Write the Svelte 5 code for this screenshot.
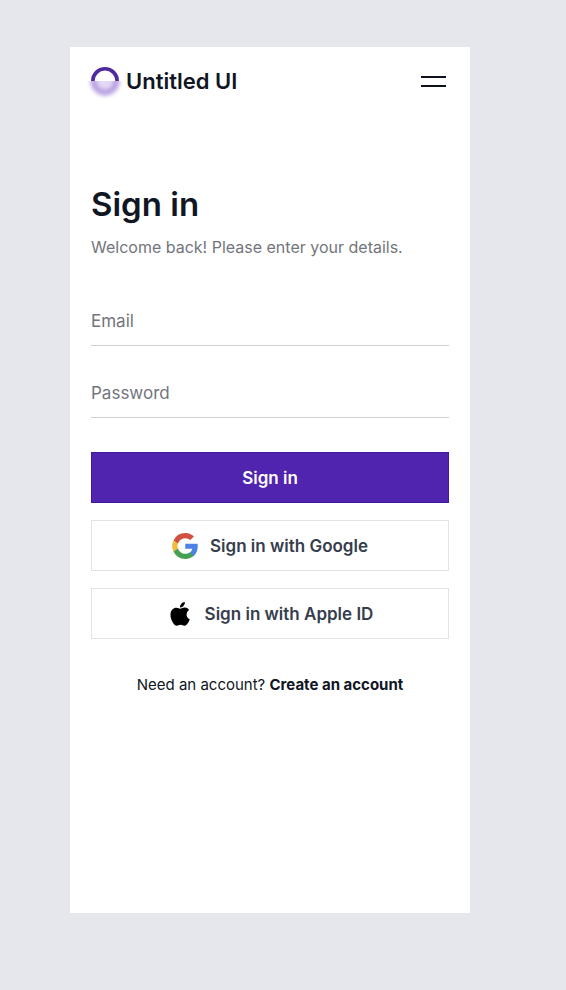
<script>
  let email = $state('');
  let password = $state('');
</script>

<main class="screen">
  <header>
    <a class="brand" href="#home">
      <svg class="logo" viewBox="0 0 36 36" aria-hidden="true">
        <defs>
          <filter id="soft" x="-50%" y="-50%" width="200%" height="200%">
            <feGaussianBlur stdDeviation="2" />
          </filter>
          <clipPath id="lower"><rect x="0" y="18" width="36" height="18" /></clipPath>
        </defs>
        <path d="M5.8 18a12.2 12.2 0 0 1 24.4 0" fill="none" stroke="#4f2a9e" stroke-width="3.6" />
        <g clip-path="url(#lower)">
          <circle cx="18" cy="18" r="11.5" fill="#e4daf5" stroke="#b59de0" stroke-width="6" filter="url(#soft)" />
        </g>
      </svg>
      <span>Untitled UI</span>
    </a>
    <button class="menu" type="button" aria-label="Open menu">
      <svg viewBox="0 0 25 14" aria-hidden="true">
        <path d="M0 3h25M0 12h25" stroke="#0c111d" stroke-width="2" />
      </svg>
    </button>
  </header>

  <section>
    <h1>Sign in</h1>
    <p class="lead">Welcome back! Please enter your details.</p>

    <form onsubmit={(e) => e.preventDefault()}>
      <div class="fields">
        <input type="email" aria-label="Email" placeholder="Email" bind:value={email} />
        <input type="password" aria-label="Password" placeholder="Password" bind:value={password} />
      </div>
      <div class="actions">
        <button class="btn primary" type="submit">Sign in</button>
        <button class="btn" type="button">
          <svg class="icon" viewBox="0 0 24 24" aria-hidden="true">
            <path fill="#4c82e6" d="M23.77 12.28c0-.82-.07-1.64-.21-2.43H12.24v4.62h6.48a5.55 5.55 0 0 1-2.4 3.65v3h3.87c2.27-2.09 3.58-5.18 3.58-8.84Z" />
            <path fill="#46a054" d="M12.24 24c3.24 0 5.97-1.06 7.96-2.89l-3.87-3c-1.08.73-2.46 1.15-4.09 1.15-3.14 0-5.8-2.12-6.75-4.96H1.5v3.09A12 12 0 0 0 12.24 24Z" />
            <path fill="#f0bd42" d="M5.49 14.3a7.2 7.2 0 0 1 0-4.6V6.61H1.5a12 12 0 0 0 0 10.78l3.99-3.09Z" />
            <path fill="#d05140" d="M12.24 4.75a6.5 6.5 0 0 1 4.6 1.8l3.43-3.43A11.5 11.5 0 0 0 12.24 0 12 12 0 0 0 1.5 6.61L5.49 9.7c.94-2.84 3.6-4.95 6.75-4.95Z" />
          </svg>
          <span>Sign in with Google</span>
        </button>
        <button class="btn" type="button">
          <svg class="icon" viewBox="0 0 26 26" aria-hidden="true">
            <g transform="translate(2.4 0.6) scale(0.95)">
              <path fill="#000" d="M20.8 8.9c-.15.11-2.7 1.55-2.7 4.75 0 3.7 3.25 5.01 3.35 5.04-.02.08-.52 1.8-1.71 3.54-1.07 1.54-2.18 3.07-3.88 3.07s-2.13-.98-4.09-.98c-1.91 0-2.59 1.02-4.14 1.02s-2.64-1.43-3.88-3.18C2.3 20.1 1.14 16.89 1.14 13.84c0-4.88 3.17-7.47 6.3-7.47 1.66 0 3.04 1.09 4.08 1.09 1 0 2.54-1.16 4.43-1.16.72 0 3.29.07 4.85 2.6ZM14.94 4.36c.78-.92 1.33-2.2 1.33-3.48 0-.18-.02-.36-.05-.5-1.27.05-2.77.84-3.68 1.9-.72.81-1.38 2.09-1.38 3.39 0 .2.03.39.05.45.08.02.21.03.34.03 1.14 0 2.57-.76 3.39-1.79Z" />
            </g>
          </svg>
          <span>Sign in with Apple ID</span>
        </button>
      </div>
    </form>

    <p class="signup">Need an account? <a href="#create">Create an account</a></p>
  </section>
</main>

<style>
  :global(body) {
    margin: 0;
    background: #e6e7ec;
  }
  .screen {
    box-sizing: border-box;
    min-height: calc(100vh - 124px);
    margin: 47px 96px 77px 70px;
    padding: 0 21px;
    background: #fff;
    color: #101623;
    font-family: Inter, "Liberation Sans", sans-serif;
  }
  header {
    display: flex;
    align-items: center;
    justify-content: space-between;
    height: 68px;
  }
  .brand {
    display: flex;
    align-items: center;
    gap: 3px;
    margin-left: -4px;
    color: inherit;
    font-size: 22px;
    line-height: 28px;
    font-weight: 600;
    text-decoration: none;
  }
  .logo {
    width: 36px;
    height: 36px;
  }
  .menu {
    display: flex;
    margin: 0 3px 0 0;
    padding: 0;
    border: 0;
    background: none;
  }
  .menu svg {
    width: 25px;
    height: 14px;
  }
  section {
    padding-top: 68px;
  }
  h1 {
    margin: 0;
    font-size: 33px;
    line-height: 42px;
    font-weight: 600;
  }
  .lead {
    margin: 10px 0 0;
    color: #73757c;
    font-size: 16px;
    line-height: 24px;
  }
  .fields {
    display: grid;
    gap: 24px;
    margin-top: 39px;
  }
  input {
    box-sizing: border-box;
    width: 100%;
    height: 48px;
    padding: 0 0 2px;
    border: 0;
    border-bottom: 1px solid #cfd0d4;
    border-radius: 0;
    outline: 0;
    background: none;
    color: #101623;
    font: 17px/24px Inter, "Liberation Sans", sans-serif;
  }
  input::placeholder {
    color: #73757c;
    opacity: 1;
  }
  .actions {
    display: grid;
    gap: 17px;
    margin-top: 34px;
  }
  .btn {
    display: flex;
    align-items: center;
    justify-content: center;
    gap: 12px;
    box-sizing: border-box;
    width: 100%;
    height: 51px;
    padding: 0;
    border: 1px solid #e2e3e7;
    background: #fff;
    color: #363d4d;
    font: 600 17px/24px Inter, "Liberation Sans", sans-serif;
  }
  .primary {
    border-color: #4318a0;
    background: #5024ae;
    color: #fff;
  }
  .icon {
    width: 26px;
    height: 26px;
  }
  .signup {
    margin: 34px 0 0;
    font-size: 15px;
    line-height: 24px;
    text-align: center;
  }
  .signup a {
    color: inherit;
    font-weight: 700;
    text-decoration: none;
  }
</style>
